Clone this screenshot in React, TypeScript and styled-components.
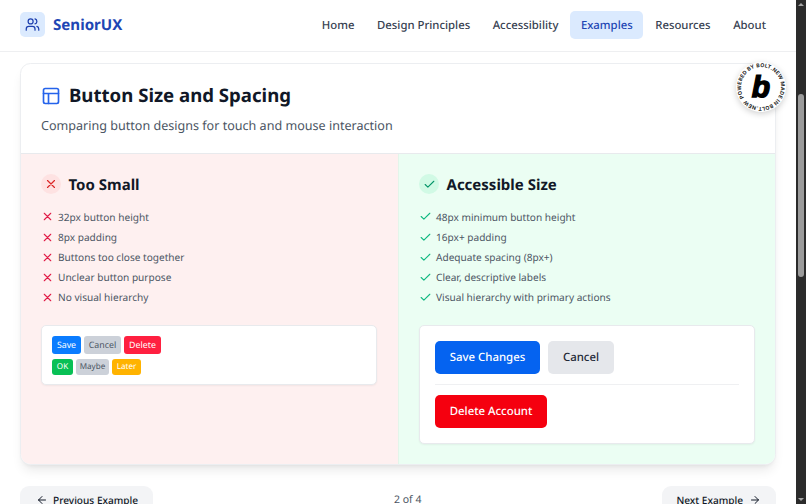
import React from "react";
import styled, { createGlobalStyle } from "styled-components";

const Global = createGlobalStyle`
  html, body { margin: 0; padding: 0; height: 100%; overflow: hidden; background: #fff; }
  body {
    font-family: "Noto Sans", "Liberation Sans", sans-serif;
    color: #111827;
    text-rendering: geometricPrecision;
    -webkit-font-smoothing: antialiased;
  }
  * { box-sizing: border-box; }
`;

const Shell = styled.div`
  display: flex;
  height: 504px;
  overflow: hidden;
`;
const Page = styled.div`
  position: relative;
  flex: 1;
  min-width: 0;
  display: flex;
  flex-direction: column;
  background: #fff;
`;
const Header = styled.header`
  flex: none;
  height: 51.5px;
  display: flex;
  align-items: center;
  justify-content: space-between;
  padding: 0 19.5px 1px 20px;
  background: #fff;
  border-bottom: 1.5px solid #eeeff1;
`;
const Brand = styled.div`
  display: flex;
  align-items: center;
  gap: 8px;
`;
const BrandIcon = styled.div`
  width: 25px;
  height: 25px;
  border-radius: 5px;
  background: #dbeafe;
  color: #1e40af;
  display: flex;
  align-items: center;
  justify-content: center;
`;
const BrandName = styled.span`
  font-size: 15.1px;
  font-weight: 700;
  color: #1e46b4;
`;
const Nav = styled.nav`
  display: flex;
  align-items: center;
  gap: 1.5px;
`;
const NavItem = styled.a<{ $active?: boolean }>`
  height: 27.5px;
  padding: 1.5px 10.5px 0;
  display: flex;
  align-items: center;
  border-radius: 5px;
  font-size: 11.35px;
  font-weight: 500;
  color: ${(p) => (p.$active ? "#1e46b4" : "#374151")};
  background: ${(p) => (p.$active ? "#dbeafe" : "transparent")};
`;
const Main = styled.main`
  flex: 1;
  min-height: 0;
  padding: 11.5px 20px 0;
  display: flex;
  flex-direction: column;
`;
const Card = styled.section`
  flex: none;
  height: 402px;
  display: flex;
  flex-direction: column;
  background: #fff;
  border-radius: 10.5px;
  border: 1px solid #eceef1;
  box-shadow: 0 8px 12px -3px rgba(0, 0, 0, 0.09), 0 3px 5px -3px rgba(0, 0, 0, 0.08);
  overflow: hidden;
`;
const CardHead = styled.div`
  flex: none;
  height: 90px;
  padding: 18px 20px 0;
  border-bottom: 1px solid #e8eaed;
`;
const TitleRow = styled.div`
  display: flex;
  align-items: center;
  gap: 8px;
  color: #2563eb;
`;
const Title = styled.h1`
  margin: 1px 0 0;
  font-size: 18.6px;
  line-height: 26px;
  font-weight: 700;
  color: #111827;
`;
const Subtitle = styled.p`
  margin: 7px 0 0;
  font-size: 12.57px;
  line-height: 20px;
  color: #4b5563;
`;
const Columns = styled.div`
  flex: 1;
  display: grid;
  grid-template-columns: 1fr 1fr;
  min-height: 0;
`;
const Column = styled.div<{ $good?: boolean }>`
  padding: 20px ${(p) => (p.$good ? "20px" : "21px")} 0 20px;
  background: ${(p) => (p.$good ? "#ebfef3" : "#fef0f0")};
  ${(p) => (p.$good ? "border-left: 1px solid #e3f5ea;" : "")}
`;
const ColumnHead = styled.div`
  display: flex;
  align-items: center;
  gap: 7.5px;
  height: 20px;
  margin-bottom: 14.6px;
`;
const HeadIcon = styled.span<{ $good?: boolean }>`
  width: 20px;
  height: 20px;
  border-radius: 50%;
  display: flex;
  align-items: center;
  justify-content: center;
  background: ${(p) => (p.$good ? "#d1fae5" : "#fee2e2")};
  color: ${(p) => (p.$good ? "#059669" : "#dc2626")};
`;
const ColumnTitle = styled.h2`
  margin: 2px 0 0;
  font-size: 15px;
  font-weight: 700;
  color: #111827;
`;
const List = styled.ul`
  list-style: none;
  margin: 0;
  padding: 0;
  display: flex;
  flex-direction: column;
  gap: 3.4px;
`;
const ListItem = styled.li<{ $good?: boolean }>`
  display: flex;
  align-items: center;
  gap: 4px;
  height: 16.7px;
  font-size: 10.1px;
  color: #4b5563;
  svg { flex: none; color: ${(p) => (p.$good ? "#10b981" : "#e11d48")}; }
`;
const DemoBox = styled.div`
  margin-top: 19.8px;
  background: #fff;
  border-radius: 5px;
  border: 1px solid #e8eaed;
  box-shadow: 0 1px 2px rgba(0, 0, 0, 0.05);
`;
const SmallDemo = styled(DemoBox)`
  height: 59.5px;
  padding: 10px;
  display: flex;
  flex-direction: column;
  gap: 4.5px;
`;
const LargeDemo = styled(DemoBox)`
  height: 118.5px;
  padding: 15px;
`;
const Row = styled.div<{ $gap: number }>`
  display: flex;
  gap: ${(p) => p.$gap}px;
`;
const TinyButton = styled.span<{ $bg: string; $fg: string; $h: number; $fs: number; $w: number }>`
  height: ${(p) => p.$h}px;
  width: ${(p) => p.$w}px;
  border-radius: 3px;
  display: flex;
  align-items: center;
  justify-content: center;
  background: ${(p) => p.$bg};
  color: ${(p) => p.$fg};
  font-size: ${(p) => p.$fs}px;
`;
const BigButton = styled.span<{ $bg: string; $fg: string; $w: number; $h: number }>`
  width: ${(p) => p.$w}px;
  height: ${(p) => p.$h}px;
  border-radius: 5px;
  display: flex;
  align-items: center;
  justify-content: center;
  background: ${(p) => p.$bg};
  color: ${(p) => p.$fg};
  font-size: 11.4px;
  font-weight: 500;
`;
const Divider = styled.div`
  height: 1px;
  margin: 10px 0;
  background: #eff0f2;
`;
const Pager = styled.div`
  flex: none;
  height: 28px;
  margin-top: 21px;
  display: flex;
  align-items: center;
  justify-content: space-between;
`;
const PagerButton = styled.span`
  height: 28px;
  padding: 0 15px 0 16px;
  display: flex;
  align-items: center;
  gap: 5px;
  background: #f3f4f6;
  border-radius: 9px;
  font-size: 10.1px;
  font-weight: 500;
  color: #111827;
`;
const NextButton = styled(PagerButton)`
  padding: 0 15px 0 14px;
  gap: 6px;
`;
const PagerCount = styled.span`
  font-size: 10.5px;
  color: #4b5563;
`;
const Badge = styled.div`
  position: absolute;
  left: 736px;
  top: 62px;
  width: 50px;
  height: 50px;
  border-radius: 50%;
  background: #fff;
  box-shadow: 0 2px 6px rgba(0, 0, 0, 0.18);
`;
const Scrollbar = styled.div`
  flex: none;
  width: 10px;
  background: #2b2b2b;
  display: flex;
  flex-direction: column;
  align-items: center;
  justify-content: space-between;
  padding: 3px 0;
  position: relative;
`;
const Thumb = styled.div`
  position: absolute;
  left: 2px;
  top: 94px;
  width: 6px;
  height: 183px;
  border-radius: 3px;
  background: #9b9b9b;
`;
const Arrow = styled.span<{ $down?: boolean }>`
  width: 0;
  height: 0;
  border-left: 3px solid transparent;
  border-right: 3px solid transparent;
  ${(p) => (p.$down ? "border-top: 3px solid #a5a5a5;" : "border-bottom: 3px solid #a5a5a5;")}
`;

const X = ({ s = 12 }: { s?: number }) => (
  <svg width={s} height={s} viewBox="0 0 24 24" fill="none" stroke="currentColor" strokeWidth="2" strokeLinecap="round" strokeLinejoin="round">
    <path d="M18 6 6 18M6 6l12 12" />
  </svg>
);
const Check = ({ s = 12 }: { s?: number }) => (
  <svg width={s} height={s} viewBox="0 0 24 24" fill="none" stroke="currentColor" strokeWidth="2" strokeLinecap="round" strokeLinejoin="round">
    <path d="M20 6 9 17l-5-5" />
  </svg>
);
const Users = () => (
  <svg width="15" height="15" viewBox="0 0 24 24" fill="none" stroke="currentColor" strokeWidth="2" strokeLinecap="round" strokeLinejoin="round">
    <path d="M16 21v-2a4 4 0 0 0-4-4H6a4 4 0 0 0-4 4v2" />
    <circle cx="9" cy="7" r="4" />
    <path d="M22 21v-2a4 4 0 0 0-3-3.87" />
    <path d="M16 3.13a4 4 0 0 1 0 7.75" />
  </svg>
);
const Layout = () => (
  <svg width="20" height="20" viewBox="0 0 24 24" fill="none" stroke="currentColor" strokeWidth="2" strokeLinecap="round" strokeLinejoin="round">
    <rect x="3" y="3" width="18" height="18" rx="2" />
    <path d="M3 9h18M9 21V9" />
  </svg>
);
const Left = () => (
  <svg width="12" height="12" viewBox="0 0 24 24" fill="none" stroke="currentColor" strokeWidth="2" strokeLinecap="round" strokeLinejoin="round">
    <path d="m12 19-7-7 7-7M19 12H5" />
  </svg>
);
const Right = () => (
  <svg width="12" height="12" viewBox="0 0 24 24" fill="none" stroke="currentColor" strokeWidth="2" strokeLinecap="round" strokeLinejoin="round">
    <path d="M5 12h14M12 5l7 7-7 7" />
  </svg>
);
const BoltSeal = () => (
  <svg width="50" height="50" viewBox="0 0 50 50">
    <defs>
      <path id="ring" d="M25 25 m-20 0 a20 20 0 1 1 40 0 a20 20 0 1 1 -40 0" transform="rotate(-32 25 25)" />
    </defs>
    <text fontFamily="Inter, 'Liberation Sans', sans-serif" fontSize="5.2" fontWeight="700" fill="#222" textLength="122" lengthAdjust="spacing">
      <textPath href="#ring" startOffset="0">POWERED BY BOLT.NEW MADE IN BOLT.NEW</textPath>
    </text>
    <text x="25" y="35" textAnchor="middle" fontFamily="'Liberation Sans', sans-serif" fontSize="30" fontWeight="700" fontStyle="italic" fill="#000" stroke="#000" strokeWidth="1.4">b</text>
  </svg>
);

const bad = ["32px button height", "8px padding", "Buttons too close together", "Unclear button purpose", "No visual hierarchy"];
const good = ["48px minimum button height", "16px+ padding", "Adequate spacing (8px+)", "Clear, descriptive labels", "Visual hierarchy with primary actions"];
const links = ["Home", "Design Principles", "Accessibility", "Examples", "Resources", "About"];

export default function App() {
  return (
    <Shell>
      <Global />
      <Page>
        <Header>
          <Brand>
            <BrandIcon><Users /></BrandIcon>
            <BrandName>SeniorUX</BrandName>
          </Brand>
          <Nav>
            {links.map((l) => (
              <NavItem key={l} $active={l === "Examples"}>{l}</NavItem>
            ))}
          </Nav>
        </Header>
        <Main>
          <Card>
            <CardHead>
              <TitleRow>
                <Layout />
                <Title>Button Size and Spacing</Title>
              </TitleRow>
              <Subtitle>Comparing button designs for touch and mouse interaction</Subtitle>
            </CardHead>
            <Columns>
              <Column>
                <ColumnHead>
                  <HeadIcon><X s={14} /></HeadIcon>
                  <ColumnTitle>Too Small</ColumnTitle>
                </ColumnHead>
                <List>
                  {bad.map((t) => (
                    <ListItem key={t}><X s={13} />{t}</ListItem>
                  ))}
                </List>
                <SmallDemo>
                  <Row $gap={3}>
                    <TinyButton $bg="#0a7cff" $fg="#fff" $h={18} $w={29} $fs={8.8}>Save</TinyButton>
                    <TinyButton $bg="#ccd1d9" $fg="#4b5563" $h={18} $w={37} $fs={8.8}>Cancel</TinyButton>
                    <TinyButton $bg="#ff2040" $fg="#fff" $h={18} $w={37} $fs={8.8}>Delete</TinyButton>
                  </Row>
                  <Row $gap={3}>
                    <TinyButton $bg="#08c055" $fg="#fff" $h={16} $w={21} $fs={8.1}>OK</TinyButton>
                    <TinyButton $bg="#ccd1d9" $fg="#4b5563" $h={16} $w={33} $fs={8.1}>Maybe</TinyButton>
                    <TinyButton $bg="#ffb300" $fg="#fff" $h={16} $w={29} $fs={8.1}>Later</TinyButton>
                  </Row>
                </SmallDemo>
              </Column>
              <Column $good>
                <ColumnHead>
                  <HeadIcon $good><Check s={13} /></HeadIcon>
                  <ColumnTitle>Accessible Size</ColumnTitle>
                </ColumnHead>
                <List>
                  {good.map((t) => (
                    <ListItem key={t} $good><Check s={13} />{t}</ListItem>
                  ))}
                </List>
                <LargeDemo>
                  <Row $gap={8}>
                    <BigButton $bg="#0563f0" $fg="#fff" $w={105} $h={33}>Save Changes</BigButton>
                    <BigButton $bg="#e5e7eb" $fg="#1f2937" $w={66} $h={33}>Cancel</BigButton>
                  </Row>
                  <Divider />
                  <BigButton $bg="#f5000f" $fg="#fff" $w={112} $h={33}>Delete Account</BigButton>
                </LargeDemo>
              </Column>
            </Columns>
          </Card>
          <Pager>
            <PagerButton><Left />Previous Example</PagerButton>
            <PagerCount>2 of 4</PagerCount>
            <NextButton>Next Example<Right /></NextButton>
          </Pager>
        </Main>
        <Badge><BoltSeal /></Badge>
      </Page>
      <Scrollbar>
        <Arrow />
        <Thumb />
        <Arrow $down />
      </Scrollbar>
    </Shell>
  );
}
